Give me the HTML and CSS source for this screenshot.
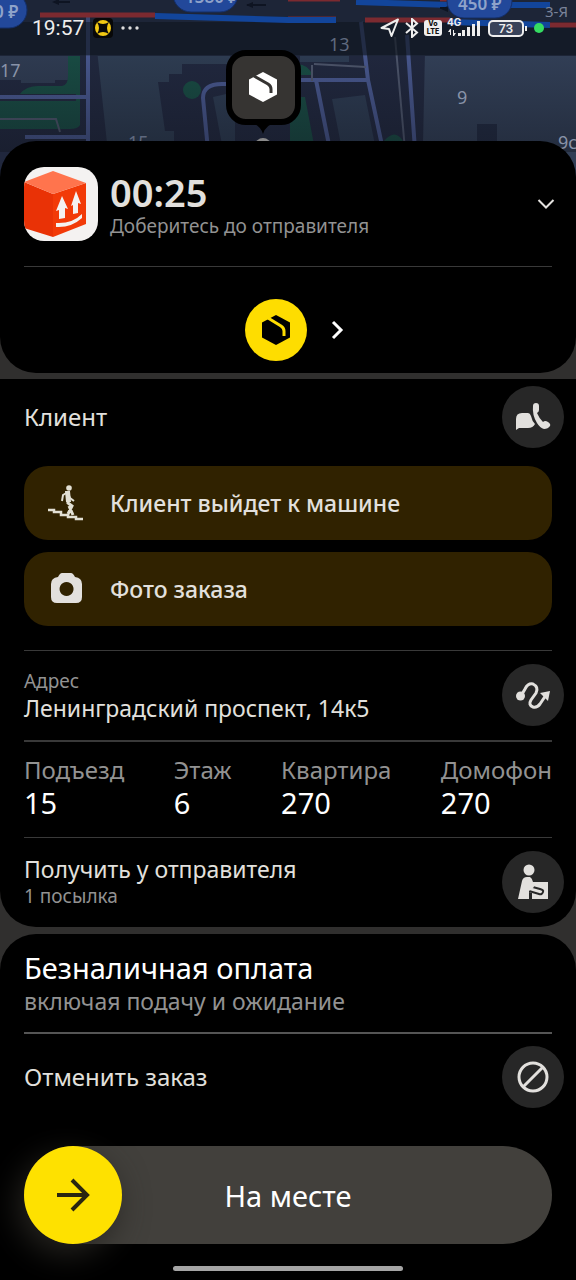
FILE: index.html
```html
<!DOCTYPE html>
<html lang="ru">
<head>
<meta charset="utf-8">
<meta name="viewport" content="width=device-width, initial-scale=1">
<title>Заказ</title>
<link rel="stylesheet" href="styles.css">
</head>
<body>
<div class="app">
  <header class="map">
    <svg class="map-art" viewBox="0 0 576 190" preserveAspectRatio="xMidYMin slice" aria-hidden="true">
      <defs>
        <linearGradient id="fade" x1="0" y1="0" x2="0" y2="1">
          <stop offset="0" stop-color="#10131c" stop-opacity="0"/>
          <stop offset="1" stop-color="#10131c" stop-opacity=".4"/>
        </linearGradient>
      </defs>
      <rect width="576" height="190" fill="#20273d"/>
      <path d="M0 55H68V80H55V83H21V80H0Z" fill="#2e3a50"/>
      <path d="M97 50H230V64H182V74H169V82H158L165 131H174V190H112Z" fill="#2d3b50"/>
      <path d="M425 50H576V190H422Z" fill="#313e55"/>
      <path d="M477 124H497V150H477Z" fill="#20293f"/>
      <path d="M213 97L235 92V150H223Z M332 99L365 95L376 150H342Z M300 50H349V62H300Z" fill="#2c3a50"/>
      <path d="M68 30H80V125Q78 129 70 129H0V101H76V94H20Q26 86 38 86H62Q68 85 68 76Z" fill="#184a42"/>
      <circle cx="192" cy="90" r="9" fill="#184a42"/>
      <path d="M290 66Q305 60 313 75H290Z M290 97H305L315 150H290Z M384 141Q395 128 403 141Z" fill="#184a42"/>
      <path d="M0 0H576V56H0Z" fill="#222b40"/>
      <path d="M0 97H88M25 137H88M88 15V150M208 150L203 98Q203 84 222 84H236M300 80H368M316 80L330 150M361 22L368 80L383 150M407 35L415 150" fill="none" stroke="#46558a" stroke-width="4"/>
      <path d="M0 119H56L60 132M314 64L366 67M395 37L405 150M312 81V65" fill="none" stroke="#4b5368" stroke-width="2"/>
      <rect width="576" height="56" y="0" fill="#0c1119" fill-opacity=".22"/>
      <rect width="576" height="33" y="22" fill="#0c1119" fill-opacity=".5"/>
      <path d="M40 15H155M288 19H336M365 20H450M550 25H576" fill="none" stroke="#7c2a30" stroke-width="5"/>
      <path d="M288 0H340M440 0H480" stroke="#7c2a30" stroke-width="3"/>
      <path d="M155 16L288 20H336M450 22L550 25" fill="none" stroke="#12459b" stroke-width="6"/>
      <path d="M356 2L450 5H550" fill="none" stroke="#12459b" stroke-width="6"/>
      <path d="M55 2H70M247 5H266M440 8H455" stroke="#0e1422" stroke-width="2"/>
      <path d="M52 2l7-3v6zM246 5l7-3v6zM441 9l7-3v6z" fill="#0e1422"/>
      <g fill="#22489a" stroke="#132e68" stroke-width="1">
        <rect x="-30" y="-8" width="57" height="36" rx="18"/>
        <rect x="173" y="-24" width="65" height="36" rx="18"/>
        <rect x="447" y="-16" width="65" height="34" rx="17"/>
      </g>
      <g class="map-price">
        <text x="-6" y="18">0 ₽</text>
        <text x="185" y="3">1380 ₽</text>
        <text x="458" y="10">450 ₽</text>
      </g>
      <rect width="576" height="96" y="56" fill="url(#fade)"/>
      <g class="map-label">
        <text x="0" y="77">17</text>
        <text class="map-dim" x="329" y="51">13</text>
        <text x="457" y="104">9</text>
        <text class="map-dim" x="128" y="149">15</text>
        <text x="558" y="149">9с1</text>
        <text class="map-street" x="545" y="17">3-Я</text>
      </g>
      <circle cx="263" cy="146" r="8" fill="#8a8a8a"/>
      <path d="M248 122Q260 124 263 134Q266 124 278 122Z" fill="#000"/>
      <rect x="229" y="53" width="69" height="69" rx="17" fill="#363432" stroke="#000" stroke-width="6"/>
      <g transform="translate(263 87)">
        <path d="M0-15L14-7.500V7.500L0 15L-14 7.500V-7.500Z" fill="#fff"/>
        <path d="M-9-11L5-3Q8-1 8 2V6" fill="none" stroke="#363432" stroke-width="3"/>
      </g>
    </svg>
    <div class="status">
      <div class="status-left">
        <span class="clock">19:57</span>
        <svg width="20" height="20" viewBox="0 0 20 20" aria-hidden="true">
          <rect width="20" height="20" rx="4" fill="#080808"/>
          <circle cx="10" cy="10" r="8" fill="#f2c913"/>
          <path d="M4 4Q10 8 16 4Q12 10 16 16Q10 12 4 16Q8 10 4 4Z" fill="#080808"/>
        </svg>
        <svg width="20" height="20" viewBox="0 0 20 20" fill="#ddd" aria-hidden="true">
          <circle cx="3" cy="10" r="1.700"/><circle cx="10" cy="10" r="1.700"/><circle cx="17" cy="10" r="1.700"/>
        </svg>
      </div>
      <div class="status-right">
        <svg width="20" height="20" viewBox="0 0 20 20" aria-hidden="true"><path d="M1.500 10L18 1.500L11.500 18L9 11Z" fill="none" stroke="#eee" stroke-width="2" stroke-linejoin="round"/></svg>
        <svg width="14" height="20" viewBox="0 0 14 20" aria-hidden="true"><path d="M1 5L12 14.500L7 19V1L12 5.500L1 15" fill="none" stroke="#eee" stroke-width="2"/></svg>
        <span class="volte"><span>Vo</span><span>LTE</span></span>
        <svg width="34" height="20" viewBox="0 0 34 20" aria-hidden="true">
          <text class="net" x="0" y="8">4G</text>
          <g fill="#eee"><path d="M3 11v3H1zM3 11h1v6H3zM6 12h1v6H6zM7 18v-3h2z"/><rect x="11" y="15" width="3" height="3"/><rect x="15" y="12" width="3" height="6"/><rect x="20" y="9" width="3" height="9"/><rect x="25" y="6" width="3" height="12"/><rect x="30" y="3" width="3" height="15"/></g>
        </svg>
        <span class="battery">73</span>
        <span class="dot"></span>
      </div>
    </div>
  </header>

  <main>
    <section class="card card-top">
      <div class="task">
        <svg class="task-logo" viewBox="0 0 74 74" aria-hidden="true">
          <defs><clipPath id="logo"><rect width="74" height="74" rx="20"/></clipPath></defs>
          <g clip-path="url(#logo)">
            <rect width="74" height="74" fill="#f4f2f1"/>
            <path d="M0 15L29 27V70L0 61Z" fill="#e93206"/>
            <path d="M29 27L62 16V57L29 70Z" fill="#f23a08"/>
            <path d="M0 15L29 4L62 16L29 27Z" fill="#ff744d"/>
            <path d="M38 29L44 42L41 41V51L35 52V43L32 44ZM52 24L57 37L54 36V46L49 47V38L47 39ZM32 56Q48 57 58 47V51Q47 61 32 60Z" fill="#f4f2f1"/>
          </g>
        </svg>
        <div class="task-text">
          <h1>00:25</h1>
          <p>Доберитесь до отправителя</p>
        </div>
        <button class="plain" aria-label="Свернуть">
          <svg width="18" height="12" viewBox="0 0 18 12"><path d="M1.500 2L9 9.500L16.500 2" fill="none" stroke="#e4e2df" stroke-width="2"/></svg>
        </button>
      </div>
      <div class="steps">
        <span class="step">
          <svg width="30" height="32" viewBox="-15 -16 30 32" aria-hidden="true">
            <path d="M0-15L14-7.500V7.500L0 15L-14 7.500V-7.500Z" fill="#000"/>
            <path d="M-8-12L5-4Q8-2 8 1V6" fill="none" stroke="#fedd00" stroke-width="3"/>
          </svg>
        </span>
        <svg width="14" height="20" viewBox="0 0 14 20" aria-hidden="true"><path d="M2 2L10 10L2 18" fill="none" stroke="#fff" stroke-width="3"/></svg>
      </div>
    </section>

    <section class="card card-mid">
      <div class="row row-client">
        <h2>Клиент</h2>
        <button class="round" aria-label="Связаться">
          <svg width="36" height="30" viewBox="0 0 36 30" fill="#e2e0dd">
            <path d="M1 28V17Q1 11 7 11H13Q15 11 16 14Q17 19 20 22Q18 26 13 26H4Z"/>
            <path d="M18 4Q18 1 21 1Q24 1 24 4V8Q24 10 22 11Q24 16 28 20Q30 18 33 20Q36 22 35 24Q33 27 29 27Q25 26 22 21Q17 13 18 4Z"/>
          </svg>
        </button>
      </div>
      <ul class="notes">
        <li>
          <svg width="36" height="36" viewBox="0 0 36 36" aria-hidden="true">
            <path d="M0 25H6V27H13V30H20V32H28V34H35" fill="none" stroke="#e2e0d4" stroke-width="2.500"/>
            <circle cx="21" cy="3" r="2.800" fill="#e2e0d4"/>
            <path d="M20 15L20 18L24 21L20 29M21 21L25 30" fill="none" stroke="#e2e0d4" stroke-width="3"/>
            <path d="M20 7L15 10L14 16M20 8L22 13L26 16" fill="none" stroke="#e2e0d4" stroke-width="2"/>
            <path d="M17 6H22L23 17H18Z" fill="#e2e0d4"/>
          </svg>
          <span>Клиент выйдет к машине</span>
        </li>
        <li>
          <svg width="36" height="36" viewBox="0 0 36 36" aria-hidden="true">
            <path fill-rule="evenodd" d="M14 2H23Q25 2 27 6Q34 7 34 13V26Q34 32 28 32H9Q3 32 3 26V13Q3 7 10 6Q12 2 14 2ZM18.500 11A7 7 0 1 0 18.600 11Z" fill="#e2e0dd"/>
          </svg>
          <span>Фото заказа</span>
        </li>
      </ul>
      <div class="row line">
        <div class="pair">
          <p class="small">Адрес</p>
          <h2>Ленинградский проспект, 14к5</h2>
        </div>
        <button class="round" aria-label="Маршрут">
          <svg width="36" height="30" viewBox="0 0 36 30">
            <circle cx="5.500" cy="16" r="4.500" fill="#e2e0dd"/>
            <path d="M6 16L10 9Q13 3 18 4Q24 7 21 13L16 20Q13 25 18 27Q22 28 25 24L31 15" fill="none" stroke="#e2e0dd" stroke-width="3"/>
            <path d="M25 13L35 11L33 21Z" fill="#e2e0dd"/>
          </svg>
        </button>
      </div>
      <dl class="facts">
        <div><dt>Подъезд</dt><dd>15</dd></div>
        <div><dt>Этаж</dt><dd>6</dd></div>
        <div><dt>Квартира</dt><dd>270</dd></div>
        <div><dt>Домофон</dt><dd>270</dd></div>
      </dl>
      <div class="row line">
        <div class="pair">
          <h2>Получить у отправителя</h2>
          <p class="small">1 посылка</p>
        </div>
        <button class="round" aria-label="Посылка">
          <svg width="32" height="36" viewBox="0 0 32 36">
            <circle cx="12" cy="6" r="5.500" fill="#e2e0dd"/>
            <path d="M16 18H31V35H15V29L12 28V20Z" fill="#e2e0dd"/>
            <path d="M12 22L23 25Q27 26 26 28Q25 31 22 30L12 27Z" fill="#e2e0dd" stroke="#272727" stroke-width="2"/>
            <path d="M1 35L5 17Q6 13 10 13H13Q15 14 16 18L17 23L12 27V35Z" fill="#e2e0dd"/>
          </svg>
        </button>
      </div>
    </section>

    <section class="card card-last">
      <div class="pay">
        <h2>Безналичная оплата</h2>
        <p>включая подачу и ожидание</p>
      </div>
      <div class="row line bright">
        <h2>Отменить заказ</h2>
        <button class="round" aria-label="Отменить">
          <svg width="32" height="32" viewBox="0 0 32 32"><g fill="none" stroke="#e2e0dd" stroke-width="3"><circle cx="16" cy="16" r="14"/><path d="M6 26L26 6"/></g></svg>
        </button>
      </div>
      <button class="slider">
        <span class="knob">
          <svg width="34" height="34" viewBox="0 0 34 34" aria-hidden="true"><path d="M1 17H31M16 2L31 17L16 32" fill="none" stroke="#2a2610" stroke-width="4"/></svg>
        </span>
        <span class="slider-label">На месте</span>
      </button>
      <div class="home"></div>
    </section>
  </main>
</div>
</body>
</html>
```
FILE: styles.css
```css
* { box-sizing: border-box; }

body, h1, h2, p, ul, dl, dd { margin: 0; padding: 0; }

body {
  background: #302f2e;
  color: #e2e0dd;
  font-family: "Noto Sans", "Open Sans", sans-serif;
}

h1, h2 { font-weight: 400; }

button {
  padding: 0;
  border: 0;
  color: inherit;
  font: inherit;
  cursor: pointer;
}

svg { display: block; flex: none; }

.app {
  display: flex;
  flex-direction: column;
  min-height: 100vh;
}

/* Map and system status bar */
.map { height: 190px; overflow: hidden; position: relative; }
.map-art { position: absolute; left: 0; top: 0; width: 100%; height: 100%; }
.map-label { fill: #8993a8; font-size: 18px; }
.map-dim { fill: #5f697e; }
.map-street { fill: #7a839a; font-size: 15px; }
.map-price { fill: #8fa3ca; font-size: 17px; font-weight: 600; }

.status {
  position: relative;
  display: flex;
  justify-content: space-between;
  align-items: center;
  height: 56px;
  padding: 0 32px;
}
.status-left, .status-right { display: flex; align-items: center; }
.status-left { gap: 7px; }
.status-right { gap: 5px; }
.clock { color: #eee; font: 400 21px/24px Roboto, sans-serif; margin-right: 2px; }
.volte {
  display: flex;
  flex-direction: column;
  width: 18px;
  height: 16px;
  border-radius: 3px;
  background: #eee;
  color: #111;
  font: 800 7px/8px Inter, sans-serif;
  text-align: center;
}
.net { fill: #eee; font: 700 10px Inter, sans-serif; }
.battery {
  position: relative;
  width: 36px;
  height: 17px;
  margin: 0 5px 0 2px;
  border: 2px solid #eee;
  border-radius: 5px;
  background: #39435a;
  color: #eee;
  font: 600 12px/13px Inter, sans-serif;
  text-align: center;
}
.battery::after {
  content: "";
  position: absolute;
  right: -5px;
  top: 4px;
  width: 2px;
  height: 5px;
  background: #eee;
}
.dot { width: 10px; height: 10px; border-radius: 50%; background: #35dc62; }

/* Cards */
main {
  display: flex;
  flex-direction: column;
  flex: 1;
  margin-top: -49px;
  position: relative;
}
.card { background: #000; }
.card-top { border-radius: 36px; margin-bottom: 6px; padding: 0 24px; }
.card-top::before {
  content: "";
  position: absolute;
  z-index: -1;
  left: 0;
  right: 0;
  top: 49px;
  height: 200px;
  background: #302f2e;
}
.card-mid { border-radius: 0 0 36px 36px; margin-bottom: 7px; }
.card-last {
  flex: 1;
  border-radius: 36px 36px 0 0;
  display: flex;
  flex-direction: column;
}

.task {
  display: flex;
  align-items: center;
  gap: 12px;
  height: 126px;
  border-bottom: 1px solid #393939;
}
.task-logo { width: 74px; height: 74px; }
.task-text { flex: 1; padding-top: 4px; }
.task-text h1 { font-size: 38px; line-height: 40px; font-weight: 600; }
.task-text p { font-size: 19px; line-height: 28px; color: #929292; }
.plain { background: none; padding: 8px 0; margin-right: -3px; }

.steps {
  display: flex;
  align-items: center;
  justify-content: center;
  gap: 24px;
  height: 106px;
  padding: 20px 0 0 14px;
}
.step {
  display: grid;
  place-items: center;
  width: 62px;
  height: 62px;
  border-radius: 50%;
  background: #fedd00;
}

.row {
  display: flex;
  align-items: center;
  justify-content: space-between;
  min-height: 90px;
  padding: 0 12px 0 24px;
  position: relative;
}
.row h2 { font-size: 24px; line-height: 28px; }
.row .pair h2 { font-size: 23px; }
.row-client { min-height: 76px; }
.line::before {
  content: "";
  position: absolute;
  top: 0;
  left: 24px;
  right: 24px;
  height: 1px;
  background: #393939;
}
.bright::before { height: 2px; background: #555; }
.small { font-size: 19px; line-height: 26px; color: #929292; }
.round {
  display: grid;
  place-items: center;
  width: 62px;
  height: 62px;
  border-radius: 50%;
  background: #272727;
}

.notes {
  display: flex;
  flex-direction: column;
  gap: 12px;
  padding: 11px 24px 24px;
  list-style: none;
}
.notes li {
  display: flex;
  align-items: center;
  gap: 26px;
  height: 74px;
  padding: 0 24px;
  border-radius: 24px;
  background: #302200;
  font-size: 23px;
  font-weight: 500;
}

.facts {
  display: flex;
  justify-content: space-between;
  margin: 0 24px;
  padding: 11px 0 18px;
  border-top: 2px solid #393939;
}
.facts dt { font-size: 24px; line-height: 34px; color: #929292; }
.facts dd { font-size: 29px; line-height: 32px; color: #fff; }

.pay { padding: 16px 24px; }
.pay h2 { font-size: 29px; line-height: 36px; color: #fff; }
.pay p { font-size: 23px; line-height: 30px; color: #929292; }

.slider {
  display: flex;
  align-items: center;
  height: 98px;
  margin: 24px 24px 22px;
  border-radius: 49px;
  background: #42403c;
  color: #fff;
  font-size: 29px;
}
.knob {
  display: grid;
  place-items: center;
  width: 98px;
  height: 98px;
  border-radius: 50%;
  background: #fee100;
  box-shadow: -6px 10px 32px #262420;
}
.slider-label { flex: 1; padding-right: 98px; }
.home {
  width: 40%;
  height: 5px;
  margin: 0 auto 8px;
  border-radius: 3px;
  background: #a5a5a5;
}
```
